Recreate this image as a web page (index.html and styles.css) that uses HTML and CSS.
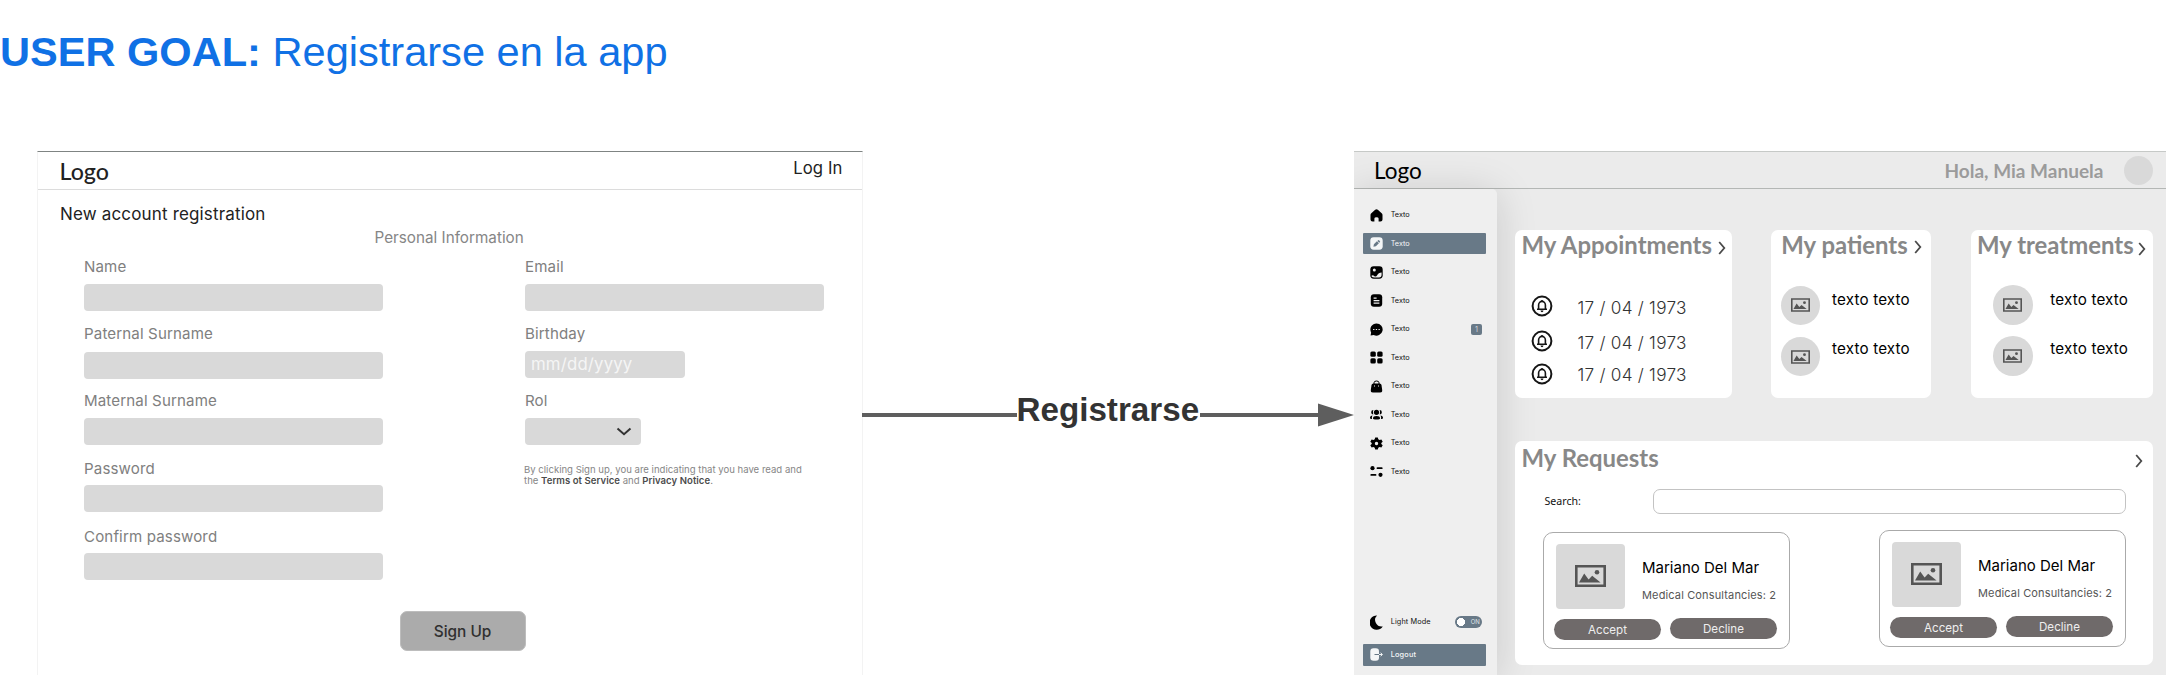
FILE: index.html
```html
<!DOCTYPE html>
<html lang="es">
<head>
<meta charset="utf-8">
<title>User goal: Registrarse en la app</title>
<link rel="stylesheet" href="styles.css">
</head>
<body>
<svg class="defs" width="0" height="0" aria-hidden="true">
  <symbol id="chev" viewBox="0 0 8 14"><path d="M1.2 1 6.3 7 1.2 13" fill="none" stroke="#4a4a4a" stroke-width="1.8"/></symbol>
  <symbol id="pic" viewBox="0 0 31 22"><path fill="#555" fill-rule="evenodd" d="M0 0h31v22H0zM2.6 2.4v17.2h25.8V2.4z"/><path fill="#555" d="M4 17.6 9.2 8.6 13.6 14.4 17.2 10.8 25.6 17.6z"/><circle cx="22" cy="7.2" r="2.3" fill="#555"/></symbol>
  <symbol id="bell" viewBox="0 0 22 22"><g fill="none" stroke="#151515"><circle cx="11" cy="11" r="9.400" stroke-width="2"/><path stroke-width="1.600" d="M6 14.200h10M7.600 14V10a3.400 3.600 0 0 1 6.800 0v4M11 6.600V5"/></g><path fill="#151515" d="M9.500 15.600h3q-.3 1.600-1.500 1.600t-1.500-1.600z"/></symbol>
  <symbol id="home" viewBox="0 0 13 13"><path d="M5.200.8q1.300-1 2.600 0l3.900 3.400q.8.800.800 1.800v4.400q0 2-2 2H8.600V9.500q0-1.300-2.100-1.300t-2.100 1.300v2.900H2.500q-2 0-2-2V6q0-1 .8-1.800z"/></symbol>
  <symbol id="edit" viewBox="0 0 13 13"><rect x=".3" y=".3" width="12.400" height="12.400" rx="3.400" fill="#f4f6f7"/><path d="m3.400 9.700.5-2.400 3-3 2 2-3 3zM7.400 3.900l1-.9q1 0 1.800 1.800l-.9 1z" fill="#687987"/></symbol>
  <symbol id="image" viewBox="0 0 13 13"><rect x=".3" y=".3" width="12.400" height="12.400" rx="3.400"/><circle cx="4.300" cy="3.900" r="1.500" fill="#efefef"/><path d="M1.400 9.800q1.500-1.300 2.800.2 1.600 1.400 2.800-.5 1.400-3 4.600-3v2.300q0 2.600-2.600 2.600H4q-2.600 0-2.600-1.600z" fill="#efefef"/></symbol>
  <symbol id="doc" viewBox="0 0 13 13"><rect x=".8" y=".3" width="11.400" height="12.400" rx="3"/><path d="M3.600 4.200h3M3.600 6.700h5.800M3.600 9.200h5.800" stroke="#efefef" stroke-width="1.200"/></symbol>
  <symbol id="chat" viewBox="0 0 13 13"><path d="M6.500.4a6.100 6.100 0 1 1-2.800 11.500L.6 12.600l.5-3.200A6.100 6.100 0 0 1 6.500.4z"/><path d="M3.100 6.500h1.300m1.400 0h1.300m1.400 0h1.300" stroke="#efefef" stroke-width="1.200"/></symbol>
  <symbol id="grid" viewBox="0 0 13 13"><rect x=".4" y=".4" width="5.400" height="5.400" rx="1.500"/><rect x="7.200" y=".4" width="5.400" height="5.400" rx="1.500"/><rect x=".4" y="7.200" width="5.400" height="5.400" rx="1.500"/><rect x="7.200" y="7.200" width="5.400" height="5.400" rx="1.500"/></symbol>
  <symbol id="bag" viewBox="0 0 13 13"><path d="M4 4V2.800Q4 1 6.500 1T9 2.800V4" fill="none" stroke="#000" stroke-width="1"/><path d="M3.300 3.500h6.400q1.500 0 1.800 1.500l.7 5q.3 2.500-2 2.500H2.800q-2.300 0-2-2.500l.7-5q.3-1.500 1.800-1.500z"/><path d="M4 6h1m3 0h1" stroke="#efefef"/></symbol>
  <symbol id="group" viewBox="0 0 13 13"><circle cx="6.500" cy="4.300" r="2.600"/><path d="M3 10.400q0-2.300 3.500-2.300t3.500 2.300q0 1-3.500 1t-3.500-1z"/><path d="M3.400 1.900a2.200 2.200 0 0 0 0 4.500q-.9-2.200 0-4.500zM9.600 1.900a2.200 2.200 0 0 1 0 4.500q.9-2.200 0-4.500zM2.600 7.500Q.2 7.700 0 9.500t2 1.400q-.4-2.200.6-3.400zM10.400 7.500q2.400.2 2.600 2t-2 1.400q.4-2.200-.6-3.400z"/></symbol>
  <symbol id="gear" viewBox="0 0 13 13"><path fill-rule="evenodd" d="M5.200.4h2.600l.5 1.800 1.200.7 1.900-.5 1.300 2.300-1.400 1.300v1l1.400 1.300-1.300 2.300-1.900-.5-1.200.7-.5 1.800H5.200l-.5-1.800-1.200-.7-1.900.5L.3 8.300 1.700 7V6L.3 4.700l1.300-2.300 1.900.5 1.200-.7zM6.500 4.800a1.700 1.700 0 1 0 0 3.400 1.700 1.700 0 0 0 0-3.400z"/></symbol>
  <symbol id="sliders" viewBox="0 0 13 13"><circle cx="2.500" cy="3.200" r="2.100"/><circle cx="10.500" cy="9.800" r="2.100"/><rect x="6.600" y="2.200" width="6" height="1.900" rx=".9"/><rect x=".4" y="8.900" width="6" height="1.900" rx=".9"/></symbol>
  <symbol id="moon" viewBox="0 0 13 15"><path d="M7 .4A7.200 7.200 0 1 0 12.800 11.500 6.600 6.600 0 0 1 7 .4z"/></symbol>
  <symbol id="exit" viewBox="0 0 13 13"><path fill="#f4f6f7" d="M3.500.3h2.400Q9 .3 9 3.500v6q0 3.200-3.100 3.200H3.500Q.3 12.700.3 9.500v-6Q.3.3 3.500.3z"/><path d="M4.500 6.500H9" stroke="#687987"/><path d="M9 6.500h3M10.600 4.700l1.800 1.800-1.800 1.800" fill="none" stroke="#f4f6f7"/></symbol>
</svg>

<h1 class="goal"><b>USER GOAL:</b> <span>Registrarse en la app</span></h1>

<main class="flow">
  <section class="signup">
    <header class="signup-bar"><span class="signup-logo">Logo</span><span class="login">Log In</span></header>
    <h2 class="signup-title">New account registration</h2>
    <p class="signup-sub">Personal Information</p>
    <form class="columns">
      <div class="column">
        <label class="field"><span>Name</span><i></i></label>
        <label class="field high"><span>Paternal Surname</span><i></i></label>
        <label class="field"><span>Maternal Surname</span><i></i></label>
        <label class="field low"><span>Password</span><i></i></label>
        <label class="field low"><span>Confirm password</span><i></i></label>
      </div>
      <div class="column">
        <label class="field"><span>Email</span><i></i></label>
        <label class="field high"><span>Birthday</span><i class="date">mm/dd/yyyy</i></label>
        <label class="field"><span>Rol</span><i class="select"><svg width="16" height="9" viewBox="0 0 16 9"><path d="M1.500 1.500 8 7.200l6.500-5.700" fill="none" stroke="#333" stroke-width="2"/></svg></i></label>
        <p class="terms"><span>By clicking Sign up, you are indicating that you have read and</span><br>the <b>Terms ot Service</b> and <b>Privacy Notice</b>.</p>
      </div>
    </form>
    <button class="submit"><span>Sign Up</span></button>
  </section>

  <div class="link">
    <span class="line"></span><b class="link-text">Registrarse</b><span class="line"></span>
    <svg width="36" height="24" viewBox="0 0 36 24"><path d="M0 .5 36 12 0 23.500z" fill="#5e5e5e"/></svg>
  </div>

  <section class="dash">
    <header class="dash-bar"><span class="dash-logo">Logo</span><span class="hello">Hola, Mia Manuela</span><span class="avatar"></span></header>
    <div class="dash-body">
      <nav class="side">
        <a class="item"><svg><use href="#home"/></svg><span>Texto</span></a>
        <a class="item active"><svg><use href="#edit"/></svg><span>Texto</span></a>
        <a class="item"><svg><use href="#image"/></svg><span>Texto</span></a>
        <a class="item"><svg><use href="#doc"/></svg><span>Texto</span></a>
        <a class="item"><svg><use href="#chat"/></svg><span>Texto</span><em class="badge">1</em></a>
        <a class="item"><svg><use href="#grid"/></svg><span>Texto</span></a>
        <a class="item"><svg><use href="#bag"/></svg><span>Texto</span></a>
        <a class="item"><svg><use href="#group"/></svg><span>Texto</span></a>
        <a class="item"><svg><use href="#gear"/></svg><span>Texto</span></a>
        <a class="item"><svg><use href="#sliders"/></svg><span>Texto</span></a>
        <a class="item mode"><svg class="moon"><use href="#moon"/></svg><span>Light Mode</span><em class="toggle">ON</em></a>
        <a class="item active logout"><svg><use href="#exit"/></svg><span>Logout</span></a>
      </nav>
      <div class="content">
        <div class="cards">
          <article class="card appointments">
            <h3><span>My Appointments</span><svg><use href="#chev"/></svg></h3>
            <ul>
              <li><svg><use href="#bell"/></svg><span>17 / 04 / 1973</span></li>
              <li><svg><use href="#bell"/></svg><span>17 / 04 / 1973</span></li>
              <li><svg><use href="#bell"/></svg><span>17 / 04 / 1973</span></li>
            </ul>
          </article>
          <article class="card patients">
            <h3><span>My patients</span><svg><use href="#chev"/></svg></h3>
            <ul>
              <li><i><svg><use href="#pic"/></svg></i><span>texto texto</span></li>
              <li><i><svg><use href="#pic"/></svg></i><span>texto texto</span></li>
            </ul>
          </article>
          <article class="card treatments">
            <h3><span>My treatments</span><svg><use href="#chev"/></svg></h3>
            <ul>
              <li><i><svg><use href="#pic"/></svg></i><span>texto texto</span></li>
              <li><i><svg><use href="#pic"/></svg></i><span>texto texto</span></li>
            </ul>
          </article>
        </div>
        <article class="card requests">
          <h3><span>My Requests</span><svg><use href="#chev"/></svg></h3>
          <div class="search"><span>Search:</span><i></i></div>
          <div class="people">
            <div class="person">
              <i class="photo"><svg><use href="#pic"/></svg></i>
              <div class="who"><b>Mariano Del Mar</b><small>Medical Consultancies: 2</small></div>
              <div class="acts"><button><span>Accept</span></button><button><span>Decline</span></button></div>
            </div>
            <div class="person second">
              <i class="photo"><svg><use href="#pic"/></svg></i>
              <div class="who"><b>Mariano Del Mar</b><small>Medical Consultancies: 2</small></div>
              <div class="acts"><button><span>Accept</span></button><button><span>Decline</span></button></div>
            </div>
          </div>
        </article>
      </div>
    </div>
  </section>
</main>
</body>
</html>
```
FILE: styles.css
```css
* { box-sizing: border-box; }
body { margin: 0; width: 2166px; height: 675px; overflow: hidden; background: #fff; font-family: Inter, sans-serif; display: flex; flex-direction: column; }
h1, h2, h3, p, ul { margin: 0; padding: 0; font-weight: 400; }
ul { list-style: none; }
i, em { font-style: normal; display: block; }
svg { display: block; flex: none; }
button { border: 0; padding: 0; font-family: inherit; }
.defs { position: absolute; }

.goal { height: 151px; padding-top: 28px; font: 400 41.570px/48px "Liberation Sans", Arial, sans-serif; color: #1071e5; white-space: nowrap; }
.flow { display: flex; flex: none; height: 524px; padding-left: 37px; }

/* registration screen */
.signup { width: 826px; border: solid #f3f3f3; border-width: 0 1px; border-top: 1px solid #7f8483; }
.signup-bar { height: 38px; display: flex; justify-content: space-between; padding: 0 19.500px 0 21.500px; border-bottom: 1px solid #dcdcdc; }
.signup-logo { font: 500 23.200px/28px Lato, sans-serif; padding-top: 4.500px; color: #222; }
.login { font-size: 16.700px; line-height: 20px; padding-top: 5.500px; color: #222; letter-spacing: .1px; }
.signup-title { font-size: 17px; line-height: 20px; padding: 14px 0 0 22px; color: #222; letter-spacing: .16px; }
.signup-sub { font-size: 15.250px; line-height: 18px; padding: 5px 0 0 336.500px; color: #868686; }
.columns { display: flex; gap: 142.500px; padding: 11px 0 0 46px; }
.column { width: 298.500px; display: grid; grid-template-rows: 68px 66px 67px 68px 53px; align-items: start; }
.field span { display: block; height: 26px; font-size: 15.100px; line-height: 18px; color: #808080; letter-spacing: .13px; }
.field.high span { line-height: 16.500px; }
.field.low span { line-height: 20px; }
.field i { height: 27px; border-radius: 4px; background: #d9d9d9; }
.field .date { width: 160px; margin-top: -.8px; padding-left: 6px; line-height: 27px; font-size: 16.800px; letter-spacing: .17px; color: #f5f5f5; }
.field .select { width: 116px; display: flex; justify-content: flex-end; align-items: center; padding-right: 9px; }
.terms { font-size: 9.570px; line-height: 11px; padding-top: 5px; margin-left: -1px; color: #868686; white-space: nowrap; }
.terms b { font-weight: 600; color: #4c4c4c; letter-spacing: .05px; }
.submit { display: block; width: 126px; height: 40px; margin: 31px 0 0 361.500px; border-radius: 7px; background: #ababab; border: 1px solid #bdbdbd; font-size: 15.400px; font-weight: 500; color: #303030; line-height: 37px; }

/* connector */
.link { width: 492px; margin-left: -1px; display: flex; align-items: flex-start; padding-top: 252px; height: 290px; }
.line { height: 4px; margin-top: 10px; background: #5e5e5e; flex: none; width: 155px; }
.link-text { width: 183px; font: 700 33.200px/36px "Liberation Sans", Arial, sans-serif; color: #333; margin: -11px 0 0 -.5px; white-space: nowrap; }
.link-text + .line { width: 118.500px; }

/* dashboard */
.dash { width: 812px; background: #ebebeb; border-top: 1px solid #c6c9c7; overflow: hidden; }
.dash-bar { height: 37px; display: flex; align-items: flex-start; padding-left: 20px; border-bottom: 1px solid #b4b7b5; }
.dash-logo { font: 400 22.500px/28px Lato, sans-serif; padding-top: 5px; width: 570.500px; color: #000; }
.hello { width: 179.500px; font: 700 19px/24px Lato, sans-serif; padding-top: 6.500px; color: #9b9b9b; white-space: nowrap; }
.avatar { width: 29px; height: 29px; margin-top: 4px; border-radius: 50%; background: #d9d9d9; }
.dash-body { display: flex; height: 486px; }
.side { width: 143px; flex: none; padding: 15.500px 11px 0 9px; background: #efefef; border-radius: 0 5px 0 0; box-shadow: 0 4px 40px rgba(0,0,0,.15); display: flex; flex-direction: column; gap: 7.500px; }
.item { height: 21px; flex: none; display: flex; align-items: center; padding-left: 7.200px; border-radius: 1px; font: 400 7.300px/10px Inter, sans-serif; color: #111; }
.item svg { width: 13px; height: 13px; margin-right: 7.500px; }
.item .moon { height: 15px; }
.item.active { background: #687987; color: #f4f6f7; }
.badge { width: 11px; height: 11px; margin: 0 4px 0 auto; border-radius: 2px; background: #687987; color: #cfd6db; text-align: center; line-height: 11px; }
.toggle { width: 27px; height: 12px; margin: 0 4px 0 auto; border-radius: 6px; background: #687987 radial-gradient(circle at 6px 6px, #fff 3.800px, transparent 4.300px); color: #dfe4e8; font-size: 6px; line-height: 12px; text-align: right; padding-right: 2px; }
.item.mode { margin-top: 122px; letter-spacing: .12px; }
.item.logout { margin-top: 3.500px; height: 22px; font-weight: 500; letter-spacing: .2px; }
.content { flex: 1; padding: 41px 13px 0 18px; position: relative; }
.cards { display: flex; justify-content: space-between; height: 168px; margin-bottom: 43px; }
.card { background: #fff; border-radius: 7px; }
.card h3 { display: flex; align-items: flex-start; justify-content: space-between; font: 700 23.900px/28px Lato, sans-serif; color: #888; white-space: nowrap; padding: 1px 6px 0 6.500px; height: 29px; }
.card h3 svg { width: 8px; height: 14px; margin-top: 9.500px; }
.appointments { width: 217px; }
.appointments ul { padding: 29.500px 0 0 16px; }
.appointments li { display: flex; align-items: center; height: 35.500px; font-size: 17.200px; font-weight: 300; letter-spacing: .25px; color: #333; }
.appointments li + li { height: 34px; }
.appointments li + li + li { height: 31px; }
.appointments li svg { width: 22px; height: 22px; margin-right: 24.500px; }
.appointments li span { padding-top: 2px; }
.patients { width: 160px; }
.patients h3 { padding: 1px 9px 0 10px; }
.patients h3 svg { margin-top: 8.500px; }
.patients ul { padding: 26.500px 0 0 9.500px; }
.treatments { width: 182.500px; }
.treatments h3 { padding-right: 7px; }
.treatments h3 svg { margin-top: 10.500px; }
.treatments ul { padding: 26px 0 0 22.500px; }
.patients li, .treatments li { display: flex; height: 51.300px; font-size: 15.200px; line-height: 18px; letter-spacing: .18px; color: #000; }
.card li i { width: 39.500px; height: 39.500px; border-radius: 50%; background: #d9d9d9; display: grid; place-items: center; }
.card li i svg { width: 19px; height: 14px; }
.patients li span { padding: 5px 0 0 11.700px; }
.treatments li span { padding: 5.500px 0 0 17.700px; }
.patients li + li span { padding-top: 3.500px; }
.treatments li + li span { padding-top: 4px; }
.requests { height: 224px; }
.requests h3 { padding: 3px 10px 0 6.500px; height: 29.500px; }
.requests h3 svg { margin-top: 9.500px; }
.search { display: flex; justify-content: space-between; padding: 18.500px 27px 0 29.500px; font: 400 10.600px/25px "Noto Sans", sans-serif; color: #111; }
.search i { width: 473px; height: 25px; border: 1px solid #c3c3c3; border-radius: 7px; }
.people { display: flex; justify-content: space-between; padding: 18px 27px 0 28px; }
.person { width: 247px; height: 117px; border: 1px solid #aaa; border-radius: 10px; display: grid; grid-template-columns: 69.500px 1fr; grid-template-rows: 64.500px 22px; row-gap: 10px; padding: 11px 0 0 11.500px; }
.second { margin-top: -2px; }
.photo { border-radius: 4px; background: #d9d9d9; display: grid; place-items: center; }
.photo svg { width: 31px; height: 22px; }
.who { padding: 15px 0 0 17px; white-space: nowrap; }
.who b { display: block; font-size: 15px; font-weight: 400; line-height: 18px; color: #000; }
.who small { display: block; font-size: 11px; line-height: 14px; padding-top: 10.500px; letter-spacing: .14px; color: #555; }
.acts { grid-column: 1 / 3; display: flex; gap: 9px; margin-left: -1.500px; }
.acts button { width: 107px; height: 21.500px; border-radius: 11px; background: #6f6a6a; color: #eee; font-size: 11.600px; line-height: 21.500px; padding-top: 1px; }
.acts button + button { margin-top: -.7px; }
```
